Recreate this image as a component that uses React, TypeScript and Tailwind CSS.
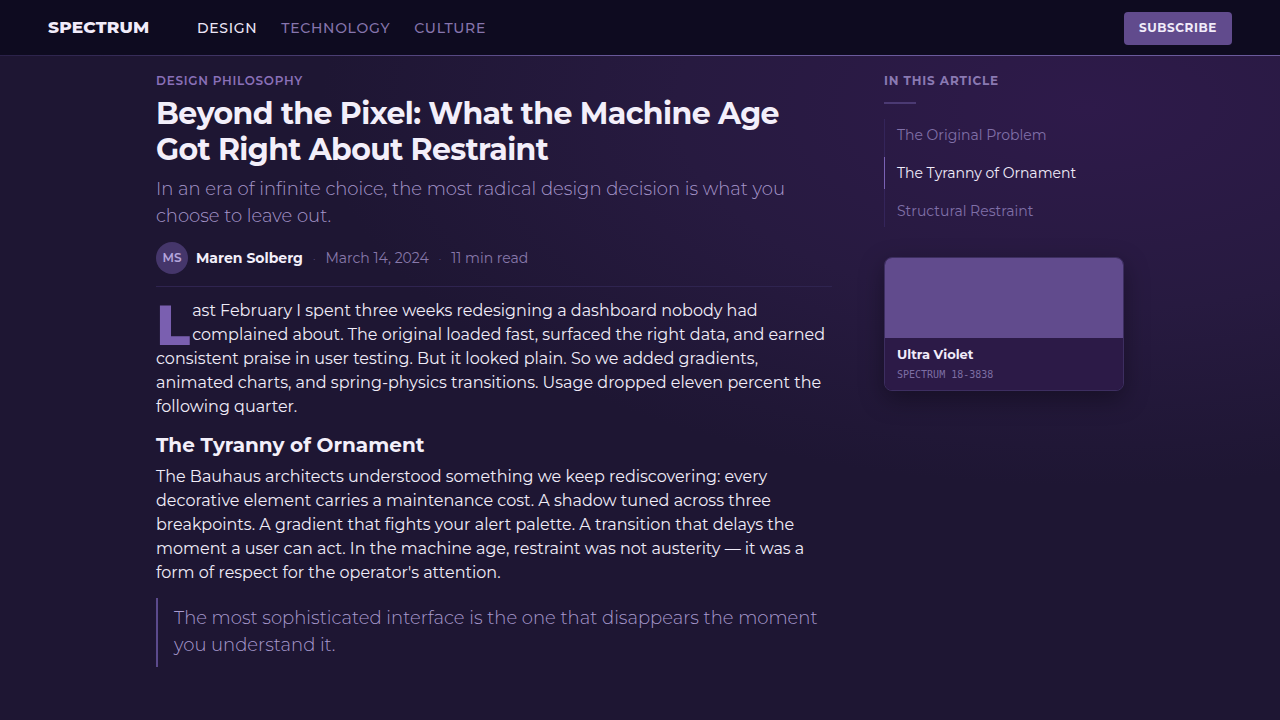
const font = "font-['Montserrat','Lato',sans-serif]";

const tocItems = [
	{ label: "The Original Problem", active: false },
	{ label: "The Tyranny of Ornament", active: true },
	{ label: "Structural Restraint", active: false },
];

const Header = () => {
	return (
		<header className="relative bg-[#0e0b20] h-[56px] flex items-center px-12">
			<div className="text-[17px] font-extrabold tracking-[0.01em] text-[#f1ecfa] w-[149px]">
				SPECTRUM
			</div>
			<nav className="flex gap-6 text-[14px] font-medium tracking-[0.05em]">
				<a className="text-[#ece6f7]">DESIGN</a>
				<a className="text-[#8675ad]">TECHNOLOGY</a>
				<a className="text-[#8675ad]">CULTURE</a>
			</nav>
			<button className="ml-auto h-[33px] px-[15px] rounded-[4px] bg-[#614b8d] text-[12px] font-bold tracking-[0.05em] text-[#f1ecfa]">
				SUBSCRIBE
			</button>
			<div className="absolute left-0 right-0 bottom-0 h-px bg-gradient-to-r from-[#2a2148] via-[#6a5a9c] to-[#6a5a9c]" />
		</header>
	);
};

const Sidebar = () => {
	return (
		<aside className="w-[240px] pt-[17px]">
			<p className="text-[12px] font-bold tracking-[0.07em] text-[#8a79b2] leading-4">
				IN THIS ARTICLE
			</p>
			<div className="w-8 h-[2px] bg-[#4b3a73] mt-[13px]" />
			<ul className="mt-[15px] border-l border-[#34255a] flex flex-col gap-[6px]">
				{tocItems.map((item) => (
					<li
						key={item.label}
						className={
							item.active
								? "-ml-px border-l border-[#7a62b5] pl-[12px] py-[6px] text-[14px] text-[#f1ecfa] leading-5"
								: "pl-[12px] py-[6px] text-[14px] text-[#8070a8] leading-5"
						}>
						{item.label}
					</li>
				))}
			</ul>
			<div className="mt-[30px] rounded-lg overflow-hidden border border-[#3d2e60] shadow-[0_8px_24px_rgba(0,0,0,0.35)]">
				<div className="h-[80px] bg-[#614b8d]" />
				<div className="bg-[#2c1a47] px-3 pt-[8px] pb-[9px]">
					<p className="text-[13px] font-bold text-[#f1ecfa] leading-4">Ultra Violet</p>
					<p className="mt-[7px] font-['DejaVu_Sans_Mono',monospace] text-[10px] text-[#7d6ea3] leading-3">
						SPECTRUM 18-3838
					</p>
				</div>
			</div>
		</aside>
	);
};

const Article = () => {
	return (
		<article className="w-[676px] pt-[17px]">
			<p className="text-[12px] font-semibold tracking-[0.06em] text-[#8a70b8] leading-4">
				DESIGN PHILOSOPHY
			</p>
			<h1 className="mt-[7px] text-[30px] font-bold leading-[36px] tracking-[-0.02em] text-[#f3effa]">
				Beyond the Pixel: What the Machine Age Got Right About Restraint
			</h1>
			<p className="mt-[8px] text-[18px] font-light leading-[27px] text-[#a797cc]">
				In an era of infinite choice, the most radical design decision is what
				you choose to leave out.
			</p>
			<div className="mt-[12px] flex items-center pb-[12px] border-b border-[#2f2450]">
				<div className="w-8 h-8 rounded-full bg-[#45366b] flex items-center justify-center text-[12px] font-semibold text-[#b4a5dc]">
					MS
				</div>
				<span className="ml-2 text-[14px] font-bold text-[#f3effa]">Maren Solberg</span>
				<span className="mx-[10px] text-[10px] text-[#5d4f82]">·</span>
				<span className="text-[14px] text-[#8879ab]">March 14, 2024</span>
				<span className="mx-[10px] text-[10px] text-[#5d4f82]">·</span>
				<span className="text-[14px] text-[#8879ab]">11 min read</span>
			</div>
			<p className="mt-[12px] text-[16px] leading-6 text-[#f0ecf8]">
				<span className="float-left mr-[2px] mt-[4px] text-[56px] leading-[44px] font-extrabold text-[#7a5fb0]">
					L
				</span>
				ast February I spent three weeks redesigning a dashboard nobody had
				complained about. The original loaded fast, surfaced the right data, and
				earned consistent praise in user testing. But it looked plain. So we
				added gradients, animated charts, and spring-physics transitions. Usage
				dropped eleven percent the following quarter.
			</p>
			<h2 className="mt-[12px] text-[20px] font-bold leading-7 text-[#f3effa]">
				The Tyranny of Ornament
			</h2>
			<p className="mt-[6px] text-[16px] leading-6 text-[#f0ecf8]">
				The Bauhaus architects understood something we keep rediscovering: every
				decorative element carries a maintenance cost. A shadow tuned across
				three breakpoints. A gradient that fights your alert palette. A
				transition that delays the moment a user can act. In the machine age,
				restraint was not austerity — it was a form of respect for the
				operator's attention.
			</p>
			<blockquote className="mt-[13px] border-l-2 border-[#5b4a8c] pl-4 pt-[7px] pb-[8px] text-[18px] font-light leading-[27px] text-[#a99bd0]">
				The most sophisticated interface is the one that disappears the moment
				you understand it.
			</blockquote>
		</article>
	);
};

const App = () => {
	return (
		<div
			className={`${font} min-h-[720px] bg-[#1e1633] bg-[radial-gradient(ellipse_80%_70%_at_85%_15%,#2e1a4a_0%,#271a40_40%,transparent_75%)]`}>
			<Header />
			<main className="flex justify-center gap-[52px]">
				<Article />
				<Sidebar />
			</main>
		</div>
	);
};

export default App;
